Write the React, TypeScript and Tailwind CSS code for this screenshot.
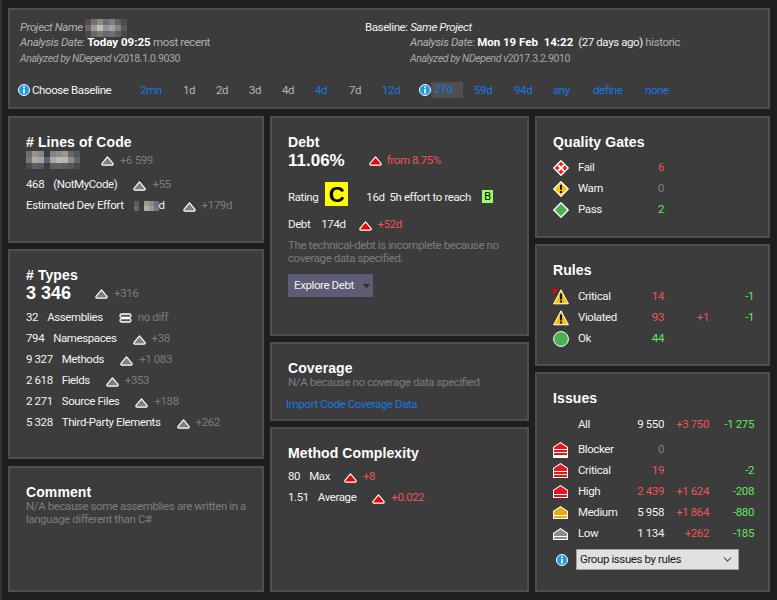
import type { ReactNode } from 'react';
import { ChevronDown } from 'lucide-react';

const red = 'text-[#ee5555]';
const green = 'text-[#5fe85f]';
const muted = 'text-[#7c7c7c]';

function Mosaic({ cells, size = 6 }: { cells: string[][]; size?: number }) {
    const w = cells[0].length * size;
    const h = cells.length * size;
    return (
        <svg width={w} height={h} className="block shrink-0" shapeRendering="crispEdges">
            {cells.map((row, y) =>
                row.map((c, x) =>
                    c ? <rect key={`${x}-${y}`} x={x * size} y={y * size} width={size} height={size} fill={c} /> : null
                )
            )}
        </svg>
    );
}

const nameCells = [
    ['#55504e', '#77726f', '#8e8a88', '#6a6f75', '#7c8085', '#5e6064', '#4c4c4c'],
    ['#6a6664', '#a09a94', '#c0bcb4', '#8e9298', '#9ea2a6', '#80848a', '#585858'],
    ['#4a4848', '#6a6866', '#7a7876', '#646870', '#6e7074', '#5c5e62', '#484848'],
];
const locCells = [
    ['#6e6a68', '#9a928c', '#7e8a96', '', '#80848c', '#8e8a88', '#a09890', '#60646c', '#54565a'],
    ['#7a7672', '#b0a89e', '#9aa6b2', '#5a6068', '#a4a8ae', '#c0b8ae', '#bcb4aa', '#8a8c94', '#60626a'],
    ['#4e4c4a', '#625e5c', '#565a60', '', '#5c5e62', '#646260', '#5e5c5a', '#54565a', '#484a4e'],
];
const effortCells = [
    ['#5e5e5e', '', '#a09a90', '#8e8a84', '#6c6e74'],
    ['#686868', '', '#b2aca2', '#9a9690', '#74767c'],
];

function Hat({ fill }: { fill: string }) {
    return (
        <svg width="13" height="10" viewBox="0 0 13 10" className="mt-[2px] block shrink-0">
            <path
                d="M6.5 .9 L12 7.4 Q12.6 9.2 11 9.2 H2 Q.4 9.2 1 7.4 Z"
                fill={fill}
                stroke="#fff"
                strokeWidth="1.2"
                strokeLinejoin="round"
            />
        </svg>
    );
}

function Same() {
    return (
        <svg width="13" height="10" viewBox="0 0 13 10" className="block shrink-0">
            <rect x="1" y="1" width="11" height="3.4" rx="1.7" fill="#555" stroke="#fff" strokeWidth="1.3" />
            <rect x="1" y="5.6" width="11" height="3.4" rx="1.7" fill="#555" stroke="#fff" strokeWidth="1.3" />
        </svg>
    );
}

function Info({ className = '' }: { className?: string }) {
    return (
        <svg width="12" height="12" viewBox="0 0 12 12" className={`block shrink-0 ${className}`}>
            <circle cx="6" cy="6" r="5.5" fill="#1c9be6" stroke="#fff" strokeWidth="1" />
            <rect x="5.2" y="2.3" width="1.6" height="1.6" fill="#fff" />
            <rect x="5.2" y="4.8" width="1.6" height="4.8" fill="#fff" />
        </svg>
    );
}

function Gate({ kind }: { kind: 'fail' | 'warn' | 'pass' }) {
    const fill = kind === 'fail' ? '#ee1c1c' : kind === 'warn' ? '#ffc107' : '#4caf50';
    return (
        <svg width="16" height="16" viewBox="0 0 16 16" className="block shrink-0">
            <path d="M8 .8 L15.2 8 L8 15.2 L.8 8 Z" fill={fill} stroke="#fff" strokeWidth="1.4" strokeLinejoin="round" />
            {kind === 'fail' && <path d="M5 5 L11 11 M11 5 L5 11" stroke="#fff" strokeWidth="1.8" />}
            {kind === 'warn' && (
                <>
                    <rect x="7" y="3.8" width="2" height="5" fill="#111" />
                    <rect x="7" y="10" width="2" height="2" fill="#111" />
                </>
            )}
        </svg>
    );
}

function Warning({ flag }: { flag?: boolean }) {
    return (
        <svg width="16" height="16" viewBox="0 0 16 16" className="block shrink-0">
            <path d="M8 .8 L15.4 14.8 H.6 Z" fill="#ffc107" stroke="#fff" strokeWidth="1" strokeLinejoin="round" />
            <rect x="6.9" y="4.5" width="2.2" height="6" fill="#111" />
            <rect x="6.9" y="11.5" width="2.2" height="2" fill="#111" />
            {flag && <path d="M0 0 H6 L0 6 Z" fill="#f00000" />}
        </svg>
    );
}

function Severity({ fill, roof, bars, height }: { fill: string; roof: number; bars: number[]; height: number }) {
    return (
        <svg width="15" height={height} viewBox={`0 0 15 ${height}`} className="block shrink-0">
            <path d={`M7.5 0 L15 5 V${height} H0 V5 Z`} fill="#fff" />
            <path d={`M7.5 1.3 L14 5.4 V${roof} H1 V5.4 Z`} fill={fill} />
            {bars.map((y) => (
                <rect key={y} x="1" y={y} width="13" height="2" fill={fill} />
            ))}
        </svg>
    );
}

function Panel({ className, children }: { className: string; children: ReactNode }) {
    return <section className={`border-2 border-[#4e4e4e] bg-[#3c3c3c] pl-4 pt-4 ${className}`}>{children}</section>;
}

function Title({ children }: { children: ReactNode }) {
    return (
        <h2 className="h-4 font-['Liberation_Sans',Arial,sans-serif] text-[14px] font-bold leading-4 tracking-[0.1px] text-white">
            {children}
        </h2>
    );
}

function Stat({
    value,
    label,
    icon,
    delta,
    color = muted,
    valueGap = 'mr-[9px]',
    iconGap = 'ml-[18px]',
}: {
    value?: string;
    label: string;
    icon: ReactNode;
    delta: string;
    color?: string;
    valueGap?: string;
    iconGap?: string;
}) {
    return (
        <div className="flex h-[21px] items-center">
            {value && <span className={valueGap}>{value}</span>}
            <span>{label}</span>
            <span className={iconGap}>{icon}</span>
            <span className={`ml-[6px] ${color}`}>{delta}</span>
        </div>
    );
}

const baselines = [
    { label: '2mn', cls: 'w-[43px] text-[#1478e6]' },
    { label: '1d', cls: 'w-[33px] text-[#b4b4b4]' },
    { label: '2d', cls: 'w-[33px] text-[#b4b4b4]' },
    { label: '3d', cls: 'w-[33px] text-[#b4b4b4]' },
    { label: '4d', cls: 'w-[33px] text-[#b4b4b4]' },
    { label: '4d', cls: 'w-[34px] text-[#1478e6]' },
    { label: '7d', cls: 'w-[33px] text-[#b4b4b4]' },
    { label: '12d', cls: 'w-[37px] text-[#1478e6]' },
];

const later = [
    { label: '59d', cls: 'w-[40px]' },
    { label: '94d', cls: 'w-[39px]' },
    { label: 'any', cls: 'w-[40px]' },
    { label: 'define', cls: 'w-[52px]' },
    { label: 'none', cls: 'w-[40px]' },
];

const types = [
    { value: '32', label: 'Assemblies', delta: 'no diff', same: true },
    { value: '794', label: 'Namespaces', delta: '+38' },
    { value: '9 327', label: 'Methods', delta: '+1 083' },
    { value: '2 618', label: 'Fields', delta: '+353' },
    { value: '2 271', label: 'Source Files', delta: '+188' },
    { value: '5 328', label: 'Third-Party Elements', delta: '+262' },
];

const issues = [
    { label: 'Blocker', icon: <Severity fill="#e8141c" roof={7} bars={[8, 11]} height={16} />, value: '0', vc: 'text-[#78828c]', up: '', down: '' },
    { label: 'Critical', icon: <Severity fill="#e8141c" roof={8} bars={[9, 12]} height={15} />, value: '19', vc: red, up: '', down: '-2' },
    { label: 'High', icon: <Severity fill="#e8141c" roof={9} bars={[10]} height={13} />, value: '2 439', vc: red, up: '+1 624', down: '-208' },
    { label: 'Medium', icon: <Severity fill="#e6ac10" roof={9} bars={[10]} height={13} />, value: '5 958', vc: '', up: '+1 864', down: '-880' },
    { label: 'Low', icon: <Severity fill="#8c8c8c" roof={8} bars={[9]} height={12} />, value: '1 134', vc: '', up: '+262', down: '-185' },
];

function ScoreRow({ icon, label, value, vc = '', up = '', down = '' }: { icon?: ReactNode; label: string; value: string; vc?: string; up?: string; down?: string }) {
    return (
        <div className="grid h-[21px] grid-cols-[25px_50px_36px_45px_45px] items-center whitespace-nowrap">
            <span>{icon}</span>
            <span>{label}</span>
            <span className={`text-right ${vc}`}>{value}</span>
            <span className={`text-right ${red}`}>{up}</span>
            <span className={`text-right ${green}`}>{down}</span>
        </div>
    );
}

export default function App() {
    return (
        <div className="h-[600px] w-[777px] overflow-hidden border-l-2 border-[#333] bg-[#1e1e1e] pl-[6px] pt-2 font-['Roboto',Arial,sans-serif] text-[11.5px] leading-[15px] tracking-[-0.4px] text-[#f2f2f2]">
            <header className="h-[101px] w-[762px] border-2 border-[#4e4e4e] bg-[#3c3c3c] pl-[10px] pt-[10px]">
                <div className="flex">
                    <div className="w-[345px]">
                        <div className="flex h-[15px] items-center italic text-[#b0b0b0]">
                            Project Name
                            <span className="ml-[2px]">
                                <Mosaic cells={nameCells} size={6} />
                            </span>
                        </div>
                        <div className="h-[15px] text-[#b0b0b0]">
                            <i>Analysis Date:</i> <b className="tracking-normal text-white">Today 09:25</b> most recent
                        </div>
                        <div className="mt-px text-[10.5px] text-[#a8a8a8]">
                            <i>Analyzed by NDepend v</i>2018.1.0.9030
                        </div>
                    </div>
                    <div>
                        <div className="h-[15px]">
                            Baseline: <i>Same Project</i>
                        </div>
                        <div className="h-[15px] pl-[45px] text-[#b0b0b0]">
                            <i>Analysis Date:</i> <b className="tracking-normal text-white">Mon 19 Feb&nbsp; 14:22</b>{' '}
                            <span className="text-[#f2f2f2]">&nbsp;(27 days ago)</span> historic
                        </div>
                        <div className="mt-px pl-[45px] text-[10.5px] text-[#a8a8a8]">
                            <i>Analyzed by NDepend v</i>2017.3.2.9010
                        </div>
                    </div>
                </div>
                <div className="-ml-[2px] mt-4 flex h-4 items-center whitespace-nowrap">
                    <div className="flex w-[122px] items-center gap-[2px]">
                        <Info />
                        <span>Choose Baseline</span>
                    </div>
                    {baselines.map((b, i) => (
                        <span key={i} className={b.cls}>
                            {b.label}
                        </span>
                    ))}
                    <Info />
                    <span className="h-4 w-8 bg-[#505050] pl-[3px] text-[#1478e6]">27d</span>
                    <div className="ml-[11px] flex text-[#1478e6]">
                        {later.map((b) => (
                            <span key={b.label} className={b.cls}>
                                {b.label}
                            </span>
                        ))}
                    </div>
                </div>
            </header>

            <div className="mt-[7px] grid w-[762px] grid-cols-[256px_259px_235px] gap-x-[6px]">
                <div className="flex flex-col">
                    <Panel className="h-[127px]">
                        <Title># Lines of Code</Title>
                        <div className="flex h-5 items-center">
                            <Mosaic cells={locCells} size={6} />
                            <span className="ml-[21px]">
                                <Hat fill="#808080" />
                            </span>
                            <span className={`ml-[6px] ${muted}`}>+6 599</span>
                        </div>
                        <div className="mt-1">
                            <Stat value="468" label="(NotMyCode)" icon={<Hat fill="#808080" />} delta="+55" iconGap="ml-[16px]" />
                            <div className="flex h-[21px] items-center">
                                <span>Estimated Dev Effort</span>
                                <span className="ml-[10px]">
                                    <Mosaic cells={effortCells} size={5} />
                                </span>
                                <span>d</span>
                                <span className="ml-[18px]">
                                    <Hat fill="#808080" />
                                </span>
                                <span className={`ml-[6px] ${muted}`}>+179d</span>
                            </div>
                        </div>
                    </Panel>
                    <Panel className="mt-[6px] h-[210px]">
                        <Title># Types</Title>
                        <div className="flex h-5 items-center">
                            <span className="font-['Liberation_Sans',Arial,sans-serif] text-[18px] font-bold tracking-normal text-white">3 346</span>
                            <span className="ml-6">
                                <Hat fill="#808080" />
                            </span>
                            <span className={`ml-[6px] ${muted}`}>+316</span>
                        </div>
                        <div className="mt-1">
                            {types.map((t) => (
                                <Stat
                                    key={t.label}
                                    value={t.value}
                                    label={t.label}
                                    icon={t.same ? <Same /> : <Hat fill="#808080" />}
                                    delta={t.delta}
                                    iconGap="ml-[16px]"
                                />
                            ))}
                        </div>
                    </Panel>
                    <Panel className="mt-[7px] h-[126px]">
                        <Title>Comment</Title>
                        <p className={`w-[226px] leading-[13px] ${muted}`}>
                            N/A because some assemblies are written in a language different than C#
                        </p>
                    </Panel>
                </div>

                <div className="flex flex-col">
                    <Panel className="h-[220px]">
                        <Title>Debt</Title>
                        <div className="flex h-5 items-center">
                            <span className="font-['Liberation_Sans',Arial,sans-serif] text-[17px] font-bold tracking-normal text-white">11.06%</span>
                            <span className="ml-6">
                                <Hat fill="#f00000" />
                            </span>
                            <span className={`ml-[5px] ${red}`}>from 8.75%</span>
                        </div>
                        <div className="mt-3 flex h-6 items-center">
                            <span className="mt-[6px]">Rating</span>
                            <span className="ml-[7px] flex h-6 w-[23px] items-center justify-center bg-[#ffff00] font-['Liberation_Sans',Arial,sans-serif] text-[22px] font-bold tracking-normal text-black">
                                C
                            </span>
                            <span className="ml-[18px] mt-[6px]">16d&nbsp; 5h effort to reach</span>
                            <span className="ml-[11px] mt-[5px] flex h-[13px] w-[11px] items-center justify-center bg-[#99ff66] text-[11px] text-black">
                                B
                            </span>
                        </div>
                        <div className="mt-2">
                            <Stat
                                value="Debt"
                                label="174d"
                                icon={<Hat fill="#f00000" />}
                                delta="+52d"
                                color={red}
                                valueGap="mr-[11px]"
                                iconGap="ml-[13px]"
                            />
                        </div>
                        <p className={`mt-1 w-[226px] leading-[13px] ${muted}`}>
                            The technical-debt is incomplete because no coverage data specified.
                        </p>
                        <button className="mt-[9px] flex h-[23px] w-[85px] items-center justify-between whitespace-nowrap bg-[#5c5c74] pl-[6px] pr-[3px] text-left">
                            Explore Debt
                            <svg width="7" height="4" viewBox="0 0 7 4" className="shrink-0">
                                <path d="M0 0 H7 L3.5 4 Z" fill="#2c2c2c" />
                            </svg>
                        </button>
                    </Panel>
                    <Panel className="mt-[6px] h-[79px]">
                        <Title>Coverage</Title>
                        <p className={`leading-[13px] ${muted}`}>N/A because no coverage data specified</p>
                        <a className="-ml-[2px] mt-[7px] block leading-4 text-[#1478e6]">Import Code Coverage Data</a>
                    </Panel>
                    <Panel className="mt-[6px] h-[165px]">
                        <Title>Method Complexity</Title>
                        <div className="mt-[5px]">
                            <Stat value="80" label="Max" icon={<Hat fill="#f00000" />} delta="+8" color={red} iconGap="ml-[14px]" />
                            <Stat value="1.51" label="Average" icon={<Hat fill="#f00000" />} delta="+0.022" color={red} iconGap="ml-[16px]" />
                        </div>
                    </Panel>
                </div>

                <div className="flex flex-col">
                    <Panel className="h-[122px]">
                        <Title>Quality Gates</Title>
                        <div className="mt-[7px]">
                            <ScoreRow icon={<Gate kind="fail" />} label="Fail" value="6" vc={red} />
                            <ScoreRow icon={<Gate kind="warn" />} label="Warn" value="0" vc="text-[#78828c]" />
                            <ScoreRow icon={<Gate kind="pass" />} label="Pass" value="2" vc={green} />
                        </div>
                    </Panel>
                    <Panel className="mt-[6px] h-[122px]">
                        <Title>Rules</Title>
                        <div className="mt-2">
                            <ScoreRow icon={<Warning flag />} label="Critical" value="14" vc={red} down="-1" />
                            <ScoreRow icon={<Warning />} label="Violated" value="93" vc={red} up="+1" down="-1" />
                            <ScoreRow
                                icon={
                                    <svg width="16" height="16" viewBox="0 0 16 16" className="block">
                                        <circle cx="8" cy="8" r="7.4" fill="#4caf50" stroke="#fff" strokeWidth="1" />
                                    </svg>
                                }
                                label="Ok"
                                value="44"
                                vc={green}
                            />
                        </div>
                    </Panel>
                    <Panel className="mt-[6px] h-[220px]">
                        <Title>Issues</Title>
                        <div className="mt-2">
                            <ScoreRow label="All" value="9 550" up="+3 750" down="-1 275" />
                        </div>
                        <div className="mt-1">
                            {issues.map((r) => (
                                <ScoreRow key={r.label} icon={r.icon} label={r.label} value={r.value} vc={r.vc} up={r.up} down={r.down} />
                            ))}
                        </div>
                        <div className="mt-[5px] flex items-center">
                            <Info className="ml-[3px]" />
                            <div className="ml-[8px] flex h-[21px] w-[163px] items-center justify-between border border-[#a0a0a0] bg-[#e1e1e1] pl-[3px] pr-[4px] text-[#1a1a1a]">
                                Group issues by rules
                                <ChevronDown size={13} className="text-[#555]" />
                            </div>
                        </div>
                    </Panel>
                </div>
            </div>
        </div>
    );
}
